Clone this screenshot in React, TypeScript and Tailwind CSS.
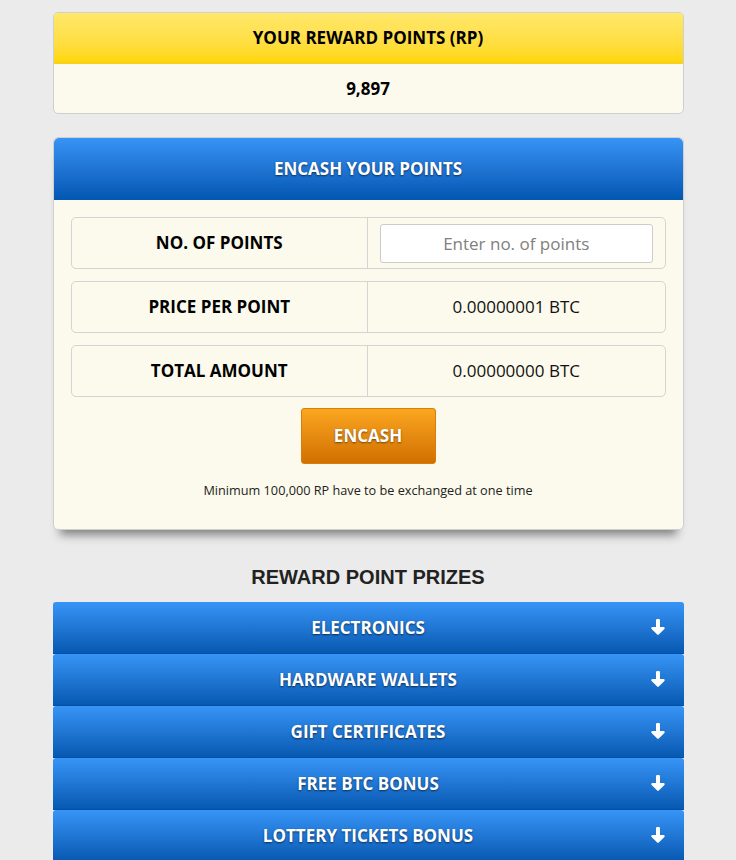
const prizes = [
  "ELECTRONICS",
  "HARDWARE WALLETS",
  "GIFT CERTIFICATES",
  "FREE BTC BONUS",
  "LOTTERY TICKETS BONUS",
]

function ArrowDown() {
  return (
    <svg width="16" height="17" viewBox="0 0 16 17" className="absolute right-[18px]">
      <path
        d="M6 1.2a1.2 1.2 0 0 1 1.2-1.2h1.6A1.2 1.2 0 0 1 10 1.2V8h3.6c1 0 1.5 1.2.8 1.9L8.8 15.5a1.1 1.1 0 0 1-1.6 0L1.6 9.9C.9 9.2 1.4 8 2.4 8H6z"
        fill="#fff"
      />
    </svg>
  )
}

function Row({ label, children }: { label: string; children: React.ReactNode }) {
  return (
    <div className="flex h-[52px] rounded-[5px] border border-[#d4d4d4]">
      <div className="flex w-1/2 items-center justify-center border-r border-[#d4d4d4] text-[17px] font-bold text-black">
        {label}
      </div>
      <div className="flex w-1/2 items-center justify-center text-[17px] text-[#111]">{children}</div>
    </div>
  )
}

export default function App() {
  return (
    <div className="min-h-[860px] bg-[#ebebeb] pt-3 font-['Open_Sans',sans-serif]">
      <div className="mx-auto w-[631px]">
        {/* reward points */}
        <div className="overflow-hidden rounded-[5px] border border-[#cfcfcf] bg-[#fcfaec]">
          <div className="flex h-[51px] items-center justify-center border-b-2 border-[#f6d21f] bg-gradient-to-b from-[#ffe86a] to-[#ffd700] text-[17px] font-bold text-black">
            YOUR REWARD POINTS (RP)
          </div>
          <div className="flex h-[49px] items-center justify-center text-[17px] font-bold text-black">9,897</div>
        </div>

        {/* encash */}
        <div className="mt-[23px] rounded-[5px] border border-[#cfcfcf] bg-[#fcfaec] shadow-[0_12px_9px_-7px_rgba(0,0,0,0.45)]">
          <div className="flex h-[62px] items-center justify-center rounded-t-[5px] bg-gradient-to-b from-[#3793f5] to-[#0257b2] text-[17px] font-bold text-white [text-shadow:0_1px_2px_rgba(0,0,0,0.6)]">
            ENCASH YOUR POINTS
          </div>
          <div className="flex flex-col gap-3 px-[17px] pt-[17px]">
            <Row label="NO. OF POINTS">
              <input
                placeholder="Enter no. of points"
                className="h-[39px] w-[273px] rounded-[3px] border border-[#cccccc] bg-white text-center text-[17px] text-[#333] outline-none placeholder:text-[#808080]"
              />
            </Row>
            <Row label="PRICE PER POINT">0.00000001 BTC</Row>
            <Row label="TOTAL AMOUNT">0.00000000 BTC</Row>
          </div>
          <div className="flex flex-col items-center pt-[11px] pb-[29px]">
            <button className="h-[56px] w-[135px] rounded-[3px] border border-[#d97c08] bg-gradient-to-b from-[#fba61f] to-[#d17000] text-[17px] font-bold text-white [text-shadow:0_1px_2px_rgba(0,0,0,0.5)]">
              ENCASH
            </button>
            <p className="mt-[17px] text-[12.7px] text-[#222]">Minimum 100,000 RP have to be exchanged at one time</p>
          </div>
        </div>

        <h2 className="mt-[32px] mb-[10px] text-center font-['Liberation_Sans',Arial,sans-serif] text-[20px] font-bold text-[#222]">
          REWARD POINT PRIZES
        </h2>

        <div className="flex flex-col">
          {prizes.map((p) => (
            <div
              key={p}
              className="relative flex h-[52px] items-center justify-center rounded-t-[3px] border-b-[1px] border-[#034f9f] bg-gradient-to-b from-[#3795f7] to-[#0559b1] text-[17px] font-bold text-white [text-shadow:0_1px_2px_rgba(0,0,0,0.6)]"
            >
              {p}
              <ArrowDown />
            </div>
          ))}
        </div>
      </div>
    </div>
  )
}
